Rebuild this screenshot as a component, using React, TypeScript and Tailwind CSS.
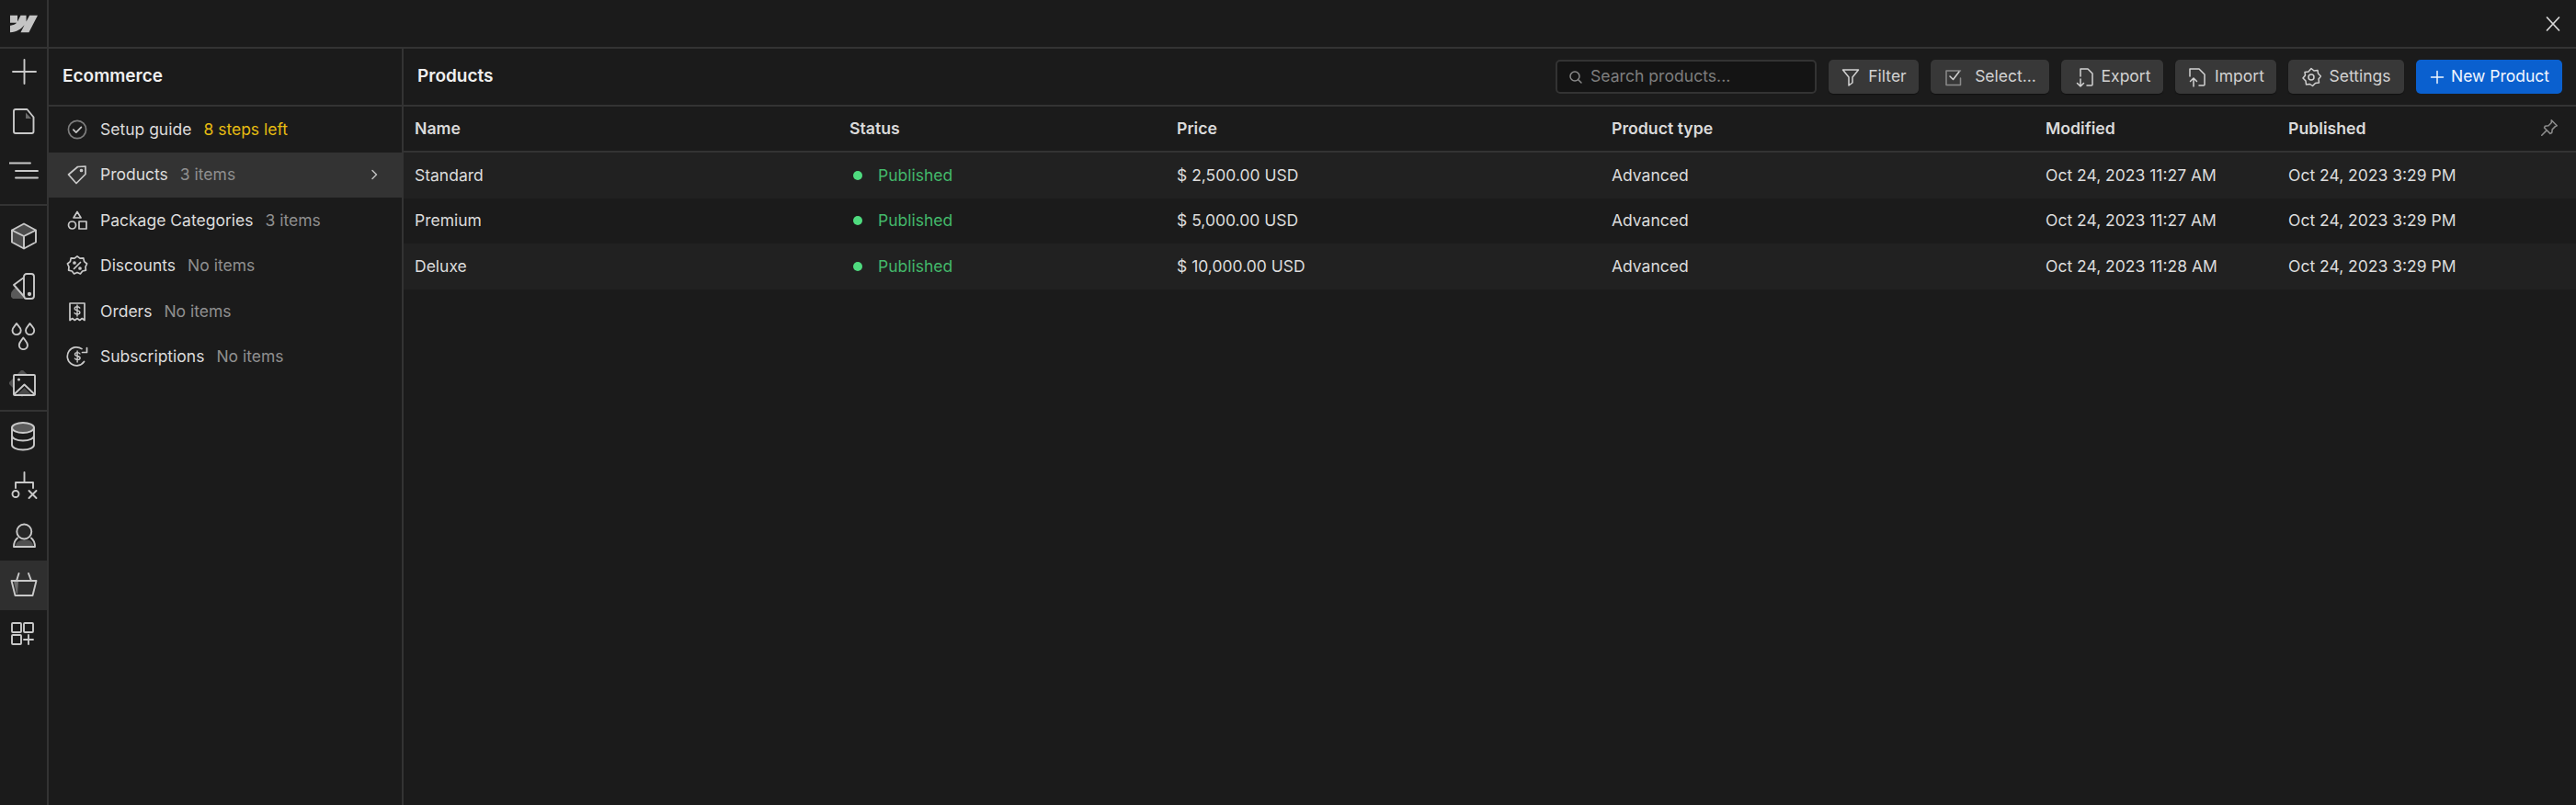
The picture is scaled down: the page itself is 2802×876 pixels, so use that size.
import type { ReactNode } from "react";

const stroke = "#c9c9c9";

function Rail({ children, active }: { children: ReactNode; active?: boolean }) {
  return (
    <div className={`h-[54px] w-full flex items-center justify-center ${active ? "bg-[#2f2f2f]" : ""}`}>
      <svg width="32" height="32" viewBox="0 0 32 32" fill="none" stroke={stroke} strokeWidth="1.9" strokeLinejoin="round" strokeLinecap="round">
        {children}
      </svg>
    </div>
  );
}

function Side({ children }: { children: ReactNode }) {
  return (
    <svg width="24" height="24" viewBox="0 0 24 24" fill="none" stroke={stroke} strokeWidth="1.7" strokeLinejoin="round" strokeLinecap="round" className="shrink-0">
      {children}
    </svg>
  );
}

function Btn({ children, icon, w, gap = "gap-2" }: { children: ReactNode; icon: ReactNode; w: string; gap?: string }) {
  return (
    <button className={`h-[37px] ${w} ${gap} rounded-[5px] bg-[#383838] text-[#d2d2d2] flex items-center justify-center shadow-[0_1px_1px_#111]`}>
      {icon}
      <span>{children}</span>
    </button>
  );
}

function BtnIcon({ children }: { children: ReactNode }) {
  return (
    <svg width="22" height="22" viewBox="0 0 22 22" fill="none" stroke="#d2d2d2" strokeWidth="1.5" strokeLinejoin="round" strokeLinecap="round" className="shrink-0">
      {children}
    </svg>
  );
}

const menu = [
  { label: "Setup guide", note: "8 steps left", yellow: true, icon: <><circle cx="12" cy="12" r="9.6" stroke="#7d7d7d" /><path d="M7.8 12.2l3 3 5.6-5.8" /></> },
  { label: "Products", note: "3 items", active: true, icon: <><path d="M12.5 3.5L21 3v8.5L11 21.5 2.5 12z" /><circle cx="16.5" cy="7.5" r="1" fill={stroke} /></> },
  { label: "Package Categories", note: "3 items", icon: <><path d="M12 2.5l4 6.5H8z" /><circle cx="6.5" cy="17" r="4" /><rect x="14" y="13" width="8" height="8" /></> },
  { label: "Discounts", note: "No items", icon: <><path d="M12 1.8l3 2.4 3.8-.3.8 3.7 3 2.4-1.6 3.4.4 3.8-3.7.8-2.3 3-3.4-1.6-3.4 1.6-2.3-3-3.7-.8.4-3.8L1.4 10l3-2.4.8-3.7 3.8.3z" /><path d="M8.5 15.5l7-7" /><circle cx="9" cy="9" r="1" fill={stroke} /><circle cx="15" cy="15" r="1" fill={stroke} /></> },
  { label: "Orders", note: "No items", icon: <><path d="M4 3h16v18.5l-2.7-2-2.6 2-2.7-2-2.7 2-2.6-2-2.7 2z" /><path d="M14.8 8.2c-.6-1-1.6-1.4-2.8-1.4-1.5 0-2.8.7-2.8 2 0 2.8 5.7 1.4 5.7 4.2 0 1.3-1.3 2-2.9 2-1.2 0-2.3-.5-2.9-1.4M12 5v12" strokeWidth="1.4" /></> },
  { label: "Subscriptions", note: "No items", icon: <><path d="M19.5 17.5A10 10 0 1 1 17 3.6" /><path d="M22.5 2.5v5h-5" /><path d="M15 9c-.6-1-1.7-1.4-2.9-1.4-1.4 0-2.6.7-2.6 1.9 0 2.7 5.6 1.4 5.6 4.1 0 1.2-1.3 1.9-2.8 1.9-1.2 0-2.3-.5-2.9-1.4M12.1 6v12" strokeWidth="1.4" /></> },
];

const columns = "grid grid-cols-[472px_356px_473px_472px_264px_1fr] items-center";

const products = [
  { name: "Standard", price: "$ 2,500.00 USD", modified: "Oct 24, 2023 11:27 AM" },
  { name: "Premium", price: "$ 5,000.00 USD", modified: "Oct 24, 2023 11:27 AM" },
  { name: "Deluxe", price: "$ 10,000.00 USD", modified: "Oct 24, 2023 11:28 AM" },
];

export default function App() {
  return (
    <div className="h-[876px] w-[2802px] bg-[#1b1b1b] text-[#dcdcdc] text-[17.5px] font-['Inter',sans-serif] flex overflow-hidden">
      {/* icon rail */}
      <div className="w-[53px] shrink-0 border-r-2 border-[#333] flex flex-col">
        <div className="h-[53px] shrink-0 border-b-2 border-[#333] flex items-center justify-center">
          <svg width="30" height="30" viewBox="0 0 24 24" fill="#c4c4c4">
            <path d="m24 4.515-7.658 14.97H9.149l3.205-6.204h-.144C9.566 16.713 5.621 18.973 0 19.485v-6.118s3.596-.213 5.71-2.435H0V4.515h6.417v5.278l.144-.001 2.622-5.277h4.854v5.244h.144l2.72-5.244H24Z" />
          </svg>
        </div>
        <div className="pb-[9px] border-b-2 border-[#333] -mt-[2px]">
          <Rail><path d="M16.5 3v26M4 16h25" /></Rail>
          <Rail>
            <path d="M18 6.5l6 6.5h-6z" fill="#6a6a6a" stroke="none" />
            <path d="M7 3h12.5l7 8.5V27a2 2 0 0 1-2 2H7a2 2 0 0 1-2-2V5a2 2 0 0 1 2-2z" />
          </Rail>
          <Rail><path d="M0 7.5h23M7 16h24M7 23.5h24" /></Rail>
        </div>
        <div className="pt-[6px] border-b-2 border-[#333]">
          <Rail>
            <path d="M3.5 9.5L16 16v13L3.5 22.5zM16 3l12.5 6.5L16 16 3.5 9.5z" fill="#4c4c4c" stroke="none" />
            <path d="M16 2.5l13 7v13l-13 7-13-7v-13zM3 9.5l13 6.5 13-6.5M16 16v13.5" />
          </Rail>
          <Rail>
            <path d="M2 28Q1 22 7 18l8 9v3H4z" fill="#5a5a5a" stroke="none" />
            <path d="M16 6a3 3 0 0 1 3-3h5a3 3 0 0 1 3 3v21a3 3 0 0 1-3 3h-5a3 3 0 0 1-3-3zM16 7L5 15l11.500 13" />
            <circle cx="22" cy="25" r="1.200" fill={stroke} />
          </Rail>
          <Rail>
            <path d="M8 3c-2 3-4.500 4.500-4.500 7.500a4.600 4.600 0 0 0 9.200 0C12.700 7.500 10 6 8 3zM22.500 3c-2 3-4.500 4.500-4.500 7.500a4.600 4.600 0 0 0 9.200 0c0-3-2.700-4.500-4.700-7.500zM15.300 18.500c-2 3-4.500 5-4.500 8a4.600 4.600 0 0 0 9.200 0c0-3-2.700-5-4.700-8z" />
          </Rail>
          <Rail>
            <path d="M14 -1L29 13 14 29 -1 14z" fill="#505050" stroke="none" />
            <rect x="5" y="5" width="23" height="22" rx="1" fill="#1b1b1b" />
            <path d="M5.500 26L16.500 15.500 27.500 26" />
            <path d="M9 26L16.500 19 24 26z" fill="#4a4a4a" stroke="none" />
            <circle cx="10.500" cy="10" r="1.500" fill={stroke} stroke="none" />
          </Rail>
        </div>
        <Rail>
          <ellipse cx="15" cy="6.500" rx="12" ry="5.500" fill="#5c5c5c" />
          <path d="M3 6.500v8.500c0 3 4.800 5.500 12 5.500s12-2.500 12-5.500V6.500M3 15v10c0 3 4.800 5.500 12 5.500s12-2.500 12-5.500V15" />
        </Rail>
        <Rail>
          <path d="M16.500 1v11M7 18v-6h19v6M21.500 21l8 8M29.500 21l-8 8" />
          <circle cx="7" cy="24.500" r="3.500" />
        </Rail>
        <Rail>
          <path d="M7 27c0-3 2-6 9.500-6.500s9.500 3.500 9.500 6.500z" fill="#505050" stroke="none" />
          <circle cx="16.300" cy="11.500" r="8" fill="#262626" />
          <path d="M9 18.500c-2.500 2-4 5-4 9.500h23c0-4.500-1.500-7.500-4-9.500" />
        </Rail>
        <Rail active>
          <path d="M5 12h5l-1 13H8z" fill="#6d6d6d" stroke="none" />
          <path d="M2.500 11h27l-4 16H6.500zM10.500 3L8 11M21 3l3 8" />
        </Rail>
        <Rail>
          <rect x="3" y="3" width="10" height="10" rx="1" />
          <rect x="16" y="3" width="10" height="10" rx="1" />
          <rect x="3" y="16" width="10" height="10" rx="1" />
          <path d="M21 16v10M16 21h10" />
        </Rail>
      </div>

      <div className="flex-1 flex flex-col min-w-0">
        {/* top bar */}
        <div className="h-[53px] shrink-0 border-b-2 border-[#333] flex items-center justify-end pr-[15px]">
          <svg width="20" height="20" viewBox="0 0 20 20" stroke="#d8d8d8" strokeWidth="1.700" strokeLinecap="round">
            <path d="M3.500 3l13 14M16.500 3l-13 14" />
          </svg>
        </div>

        <div className="flex-1 flex min-h-0">
          {/* ecommerce menu */}
          <div className="w-[386px] shrink-0 border-r-2 border-[#333]">
            <div className="h-[63px] border-b-2 border-[#333] flex items-center pl-[15px] text-[19px] font-semibold text-[#efefef]">Ecommerce</div>
            <div>
              {menu.map((item) => (
                <div key={item.label} className={`h-[49.5px] flex items-center pl-[19px] pr-[24px] ${item.active ? "bg-[#333]" : ""}`}>
                  <Side>{item.icon}</Side>
                  <span className="ml-[13px] text-[#dcdcdc]">{item.label}</span>
                  <span className={`ml-[13px] ${item.yellow ? "text-[#e6bb12]" : "text-[#8f8f8f]"}`}>{item.note}</span>
                  {item.active && (
                    <svg width="12" height="14" viewBox="0 0 12 14" fill="none" stroke="#c0c0c0" strokeWidth="1.500" strokeLinecap="round" strokeLinejoin="round" className="ml-auto">
                      <path d="M4 2.500L8.500 7 4 11.500" />
                    </svg>
                  )}
                </div>
              ))}
            </div>
          </div>

          {/* products table */}
          <div className="flex-1 min-w-0">
            <div className="h-[63px] border-b-2 border-[#333] flex items-center pl-[15px] pr-[15px]">
              <div className="text-[19px] font-semibold text-[#efefef]">Products</div>
              <div className="ml-auto flex items-center gap-[13px]">
                <div className="h-[37px] w-[284px] rounded-[5px] bg-[#141414] border-2 border-[#333] flex items-center pl-[12px] gap-[8px] text-[17.6px] text-[#7e7e7e]">
                  <svg width="16" height="16" viewBox="0 0 16 16" fill="none" stroke="#8a8a8a" strokeWidth="1.500" strokeLinecap="round">
                    <circle cx="7" cy="7" r="5" />
                    <path d="M11 11l3 3" />
                  </svg>
                  Search products...
                </div>
                <Btn w="w-[98px]" icon={<BtnIcon><path d="M2.500 3h17l-6.500 8v6l-4 3v-9z" /></BtnIcon>}>Filter</Btn>
                <Btn w="w-[129px]" gap="gap-[12px]" icon={<BtnIcon><path d="M18.500 4H3v15.500h15.500V12" stroke="#8a8a8a" /><path d="M7 10l3.500 3.500L17 5" /></BtnIcon>}>Select...</Btn>
                <Btn w="w-[111px]" icon={<BtnIcon><path d="M7 10V2h8l5 5v12a1 1 0 0 1-1 1h-5M7 13v8M3.500 17.500L7 21l3.500-3.500" /></BtnIcon>}>Export</Btn>
                <Btn w="w-[110px]" icon={<BtnIcon><path d="M3 10V2h10l6 6v11a1 1 0 0 1-1 1h-5M7 21v-9M3.500 15.500L7 12l3.500 3.500" /></BtnIcon>}>Import</Btn>
                <Btn w="w-[126px]" icon={<BtnIcon><path d="M11 1.500l3 2.500 4-.5.500 3.500 3 3-2.500 3 .5 4-4 .5-3 3-3-2-4 .5-.5-4-3-3 2.500-3-.5-3.500 4-.5z" /><circle cx="11" cy="11" r="3" /></BtnIcon>}>Settings</Btn>
                <button className="h-[37px] w-[159px] rounded-[5px] bg-[#0a60cf] text-[#f2f7ff] flex items-center justify-center gap-[6px]">
                  <svg width="18" height="18" viewBox="0 0 18 18" stroke="#f2f7ff" strokeWidth="1.500" strokeLinecap="round"><path d="M9 2.500v13M2.500 9h13" /></svg>
                  New Product
                </button>
              </div>
            </div>

            <div className={`${columns} h-[50px] border-b-2 border-[#333] font-semibold text-[17.7px] text-[#dadada] relative`}>
              <div className="pl-[12px]">Name</div>
              {["Status", "Price", "Product type", "Modified", "Published"].map((h) => (
                <div key={h} className="pl-[13px]">{h}</div>
              ))}
              <svg width="22" height="22" viewBox="0 0 24 24" fill="none" stroke="#8c8c8c" strokeWidth="1.700" strokeLinejoin="round" strokeLinecap="round" className="absolute right-[18px] top-[12px]">
                <path d="M14.500 3l6.500 6.500-2 1-3.500 3.500-.5 4-2 1-7-7 1-2 4-.5 3.500-3.500zM8 16l-5 5" />
              </svg>
            </div>

            {products.map((p, i) => (
              <div key={p.name} className={`${columns} h-[49.5px] ${i % 2 === 0 ? "bg-[#212121]" : ""}`}>
                <div className="pl-[12px]">{p.name}</div>
                <div className="pl-[13px] flex items-center gap-[17px] text-[#43b86a]">
                  <span className="ml-[4px] w-[10px] h-[10px] rounded-full bg-[#4fdb7f]" />
                  Published
                </div>
                <div className="pl-[13px]">{p.price}</div>
                <div className="pl-[13px]">Advanced</div>
                <div className="pl-[13px]">{p.modified}</div>
                <div className="pl-[13px]">Oct 24, 2023 3:29 PM</div>
              </div>
            ))}
          </div>
        </div>
      </div>
    </div>
  );
}
